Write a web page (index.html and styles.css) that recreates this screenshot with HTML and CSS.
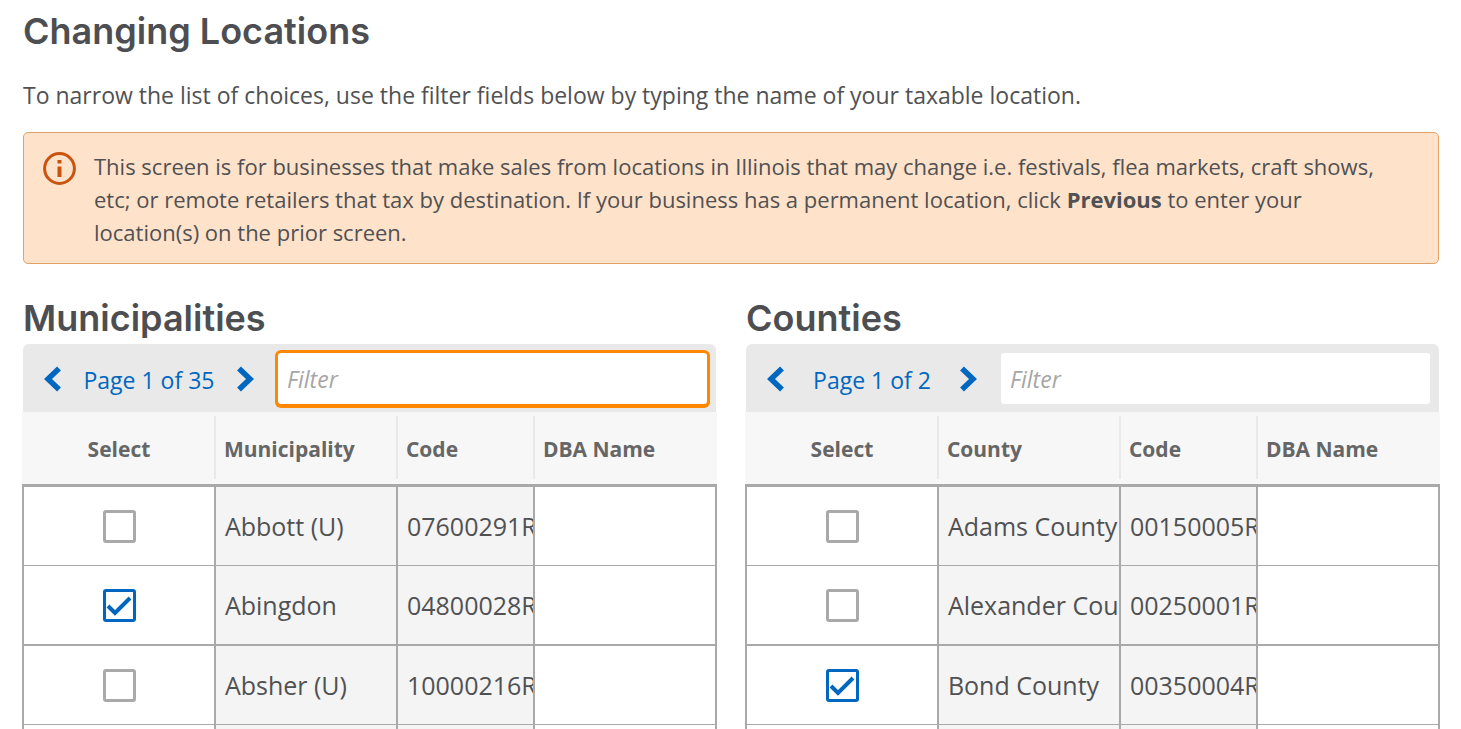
FILE: index.html
```html
<!DOCTYPE html>
<html lang="en">
<head>
    <meta charset="UTF-8">
    <meta name="viewport" content="width=device-width, initial-scale=1.0">
    <title>Changing Locations</title>
    <link rel="stylesheet" href="styles.css">
</head>
<body>

<main class="page">
    <h1>Changing Locations</h1>
    <p class="intro">To narrow the list of choices, use the filter fields below by typing the name of your taxable location.</p>

    <div class="notice">
        <svg class="notice-icon" viewBox="0 0 33 33" aria-hidden="true">
            <circle cx="16.500" cy="16.500" r="14.900" fill="none" stroke="#c9540f" stroke-width="3"/>
            <path d="M14.500 8h4v3.500h-4zM14.500 14.500h4v10.500h-4z" fill="#c9540f"/>
        </svg>
        <p>This screen is for businesses that make sales from locations in Illinois that may change i.e. festivals, flea markets, craft shows, etc; or remote retailers that tax by destination. If your business has a permanent location, click <strong>Previous</strong> to enter your location(s) on the prior screen.</p>
    </div>

    <div class="lists">
        <section class="list">
            <h2>Municipalities</h2>
            <div class="toolbar">
                <div class="pager">
                    <button type="button" class="arrow" aria-label="Previous page"><svg viewBox="0 0 18 26"><path d="M15 2.500L4 13l11 10.500" fill="none" stroke="#0067c0" stroke-width="5.500"/></svg></button>
                    <a href="#" class="page-link">Page 1 of 35</a>
                    <button type="button" class="arrow" aria-label="Next page"><svg viewBox="0 0 18 26"><path d="M3 2.500L14 13L3 23.500" fill="none" stroke="#0067c0" stroke-width="5.500"/></svg></button>
                </div>
                <input type="text" class="filter active" placeholder="Filter" aria-label="Filter municipalities">
            </div>
            <table>
                <colgroup><col class="col-select"><col class="col-name"><col class="col-code"><col class="col-dba"></colgroup>
                <thead>
                    <tr>
                        <th><div>Select</div></th>
                        <th><div>Municipality</div></th>
                        <th><div>Code</div></th>
                        <th><div>DBA Name</div></th>
                    </tr>
                </thead>
                <tbody>
                    <tr>
                        <td><input type="checkbox" aria-label="Select Abbott (U)"></td>
                        <td>Abbott (U)</td>
                        <td>07600291R</td>
                        <td><input type="text" class="dba" aria-label="DBA name"></td>
                    </tr>
                    <tr>
                        <td><input type="checkbox" aria-label="Select Abingdon" checked></td>
                        <td>Abingdon</td>
                        <td>04800028R</td>
                        <td><input type="text" class="dba" aria-label="DBA name"></td>
                    </tr>
                    <tr>
                        <td><input type="checkbox" aria-label="Select Absher (U)"></td>
                        <td>Absher (U)</td>
                        <td>10000216R</td>
                        <td><input type="text" class="dba" aria-label="DBA name"></td>
                    </tr>
                    <tr>
                        <td></td>
                        <td></td>
                        <td></td>
                        <td></td>
                    </tr>
                </tbody>
            </table>
        </section>

        <section class="list">
            <h2>Counties</h2>
            <div class="toolbar">
                <div class="pager">
                    <button type="button" class="arrow" aria-label="Previous page"><svg viewBox="0 0 18 26"><path d="M15 2.500L4 13l11 10.500" fill="none" stroke="#0067c0" stroke-width="5.500"/></svg></button>
                    <a href="#" class="page-link">Page 1 of 2</a>
                    <button type="button" class="arrow" aria-label="Next page"><svg viewBox="0 0 18 26"><path d="M3 2.500L14 13L3 23.500" fill="none" stroke="#0067c0" stroke-width="5.500"/></svg></button>
                </div>
                <input type="text" class="filter" placeholder="Filter" aria-label="Filter counties">
            </div>
            <table>
                <colgroup><col class="col-select"><col class="col-name"><col class="col-code"><col class="col-dba"></colgroup>
                <thead>
                    <tr>
                        <th><div>Select</div></th>
                        <th><div>County</div></th>
                        <th><div>Code</div></th>
                        <th><div>DBA Name</div></th>
                    </tr>
                </thead>
                <tbody>
                    <tr>
                        <td><input type="checkbox" aria-label="Select Adams County"></td>
                        <td>Adams County</td>
                        <td>00150005R</td>
                        <td><input type="text" class="dba" aria-label="DBA name"></td>
                    </tr>
                    <tr>
                        <td><input type="checkbox" aria-label="Select Alexander County"></td>
                        <td>Alexander Cou</td>
                        <td>00250001R</td>
                        <td><input type="text" class="dba" aria-label="DBA name"></td>
                    </tr>
                    <tr>
                        <td><input type="checkbox" aria-label="Select Bond County" checked></td>
                        <td>Bond County</td>
                        <td>00350004R</td>
                        <td><input type="text" class="dba" aria-label="DBA name"></td>
                    </tr>
                    <tr>
                        <td></td>
                        <td></td>
                        <td></td>
                        <td></td>
                    </tr>
                </tbody>
            </table>
        </section>
    </div>
</main>

</body>
</html>
```
FILE: styles.css
```css
* {
    box-sizing: border-box;
}

body {
    margin: 0;
    height: 100vh;
    overflow: hidden;
    background-color: #ffffff;
    color: #505153;
    font-family: 'Open Sans', 'Noto Sans', sans-serif;
    font-size: 23px;
    line-height: 33px;
}

.page {
    padding: 8px 22px 0 23px;
}

h1, h2 {
    margin: 0;
    font-family: 'Inter', sans-serif;
    font-size: 36px;
    font-weight: 600;
    line-height: 46px;
    color: #4d4e52;
}

.intro {
    margin: 25px 0 20px;
}

.notice {
    display: flex;
    gap: 18px;
    padding: 17px 34px 14px 19px;
    background-color: #ffe2ca;
    border: 1px solid #e3a268;
    border-radius: 5px;
    font-size: 22px;
}

.notice p {
    margin: 0;
    flex: 1;
}

.notice-icon {
    width: 33px;
    height: 33px;
    margin-top: 2px;
    flex: none;
}

.lists {
    display: grid;
    grid-template-columns: 1fr 1fr;
    gap: 30px;
    margin-top: 31px;
}

.list {
    min-width: 0;
}

h2 {
    margin-bottom: 3px;
}

.toolbar {
    display: flex;
    height: 68px;
    padding: 9px 9px 8px 21px;
    background-color: #e9e9e9;
    border-radius: 6px 6px 0 0;
}

.pager {
    display: flex;
    align-items: center;
    justify-content: space-between;
    width: 210px;
    margin-right: 24px;
}

.arrow {
    padding: 0;
    border: none;
    background: none;
    cursor: pointer;
}

.arrow svg {
    display: block;
    width: 18px;
    height: 26px;
}

.page-link {
    padding-top: 3px;
    color: #0067c0;
    text-decoration: none;
}

.filter {
    flex: 1;
    min-width: 0;
    padding: 2px 9px 0;
    border: none;
    border-radius: 3px;
    background-color: #ffffff;
    font: inherit;
    color: inherit;
    outline: none;
}

.filter::placeholder {
    color: #a6a6a6;
    font-style: italic;
}

.filter.active, .filter:focus {
    box-shadow: 0 0 0 3px #ff8800, 0 1px 0 3px #ff8800;
}

table {
    table-layout: fixed;
    width: calc(100% + 2px);
    margin: 0 -1px;
    border-spacing: 0;
}

.col-select {
    width: 27.9%;
}

.col-name {
    width: 26.2%;
}

.col-code {
    width: 19.7%;
}

.col-dba {
    width: 26.2%;
}

th {
    height: 75px;
    padding: 4px 0 5px;
    background-color: #f7f7f7;
    border-bottom: 3px solid #a9a9a9;
    font-size: 21px;
    text-align: left;
    color: #666666;
}

th div {
    height: 63px;
    padding-left: 8px;
    border-right: 2px solid #e9e9e9;
    line-height: 66px;
}

th:first-child div {
    padding: 0 0 0 2px;
    text-align: center;
}

th:last-child div {
    border-right: none;
}

td {
    height: 79px;
    padding: 1px 0 0 9px;
    border-right: 2px solid #a9a9a9;
    border-bottom: 1px solid #a9a9a9;
    background-color: #f4f4f4;
    font-size: 25px;
    white-space: nowrap;
    overflow: hidden;
}

tr:nth-child(even) td {
    height: 80px;
    border-bottom-width: 2px;
}

td:first-child {
    padding: 0 0 0 2px;
    border-left: 2px solid #a9a9a9;
    background-color: #ffffff;
    text-align: center;
}

td:last-child {
    padding: 0;
    background-color: #ffffff;
}

.dba {
    display: block;
    width: 100%;
    height: 60px;
    padding: 0 9px;
    border: none;
    outline: none;
    background: none;
    font: inherit;
    color: inherit;
}

input[type="checkbox"] {
    appearance: none;
    display: block;
    width: 33px;
    height: 33px;
    margin: 0 auto;
    border: 3px solid #a9a9a9;
    border-radius: 3px;
    background-color: #ffffff;
}

input[type="checkbox"]:checked {
    border-color: #0067c0;
    background-image: url("data:image/svg+xml,%3Csvg xmlns='http://www.w3.org/2000/svg' viewBox='0 0 27 27'%3E%3Cpath d='M2 14L9 21L24 6' fill='none' stroke='%230067c0' stroke-width='4'/%3E%3C/svg%3E");
}
```
